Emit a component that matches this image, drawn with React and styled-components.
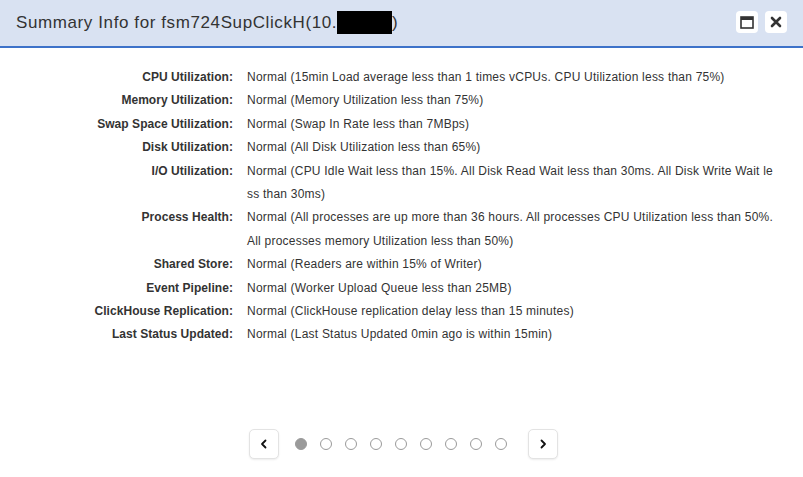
import React from "react";
import styled, { createGlobalStyle } from "styled-components";

const Global = createGlobalStyle`
  html, body { margin: 0; padding: 0; background: #fff; }
  body { font-family: "Liberation Sans", Arial, sans-serif; color: #333; }
  * { box-sizing: border-box; }
`;

const Dialog = styled.div`
  width: 803px;
  height: 477px;
  display: flex;
  flex-direction: column;
  background: #fff;
`;

const Header = styled.div`
  height: 48px;
  flex: none;
  display: flex;
  align-items: center;
  justify-content: space-between;
  padding: 0 16px 2px 16px;
  background: #d9e2f2;
  border-bottom: 2px solid #3d72c9;
`;

const Title = styled.div`
  font-size: 17px;
  color: #333;
  display: flex;
  align-items: center;
  letter-spacing: 0.6px;
  padding-top: 1px;
`;

const Redacted = styled.span`
  display: inline-block;
  width: 55px;
  height: 23px;
  background: #000;
`;

const Tools = styled.div`
  display: flex;
  gap: 7px;
`;

const ToolButton = styled.button`
  width: 22px;
  height: 22px;
  border: none;
  border-radius: 4px;
  background: #fff;
  padding: 0;
  display: flex;
  align-items: center;
  justify-content: center;
  color: #333;
`;

const Body = styled.div`
  flex: 1;
  display: grid;
  grid-template-columns: 233px 1fr;
  column-gap: 14px;
  align-content: start;
  padding: 18px 26px 0 0;
  font-size: 12px;
  line-height: 23.4px;
  letter-spacing: 0.22px;
`;

const Label = styled.div`
  text-align: right;
  font-weight: bold;
  color: #333;
  white-space: nowrap;
  letter-spacing: 0.05px;
`;

const Value = styled.div`
  color: #333;
  word-break: break-all;
`;

const Pager = styled.div`
  flex: none;
  display: flex;
  align-items: center;
  justify-content: center;
  padding-bottom: 2px;
  height: 65px;
  padding-left: 4px;
`;

const NavButton = styled.button`
  width: 30px;
  height: 30px;
  border: 1px solid #e3e3e3;
  border-radius: 5px;
  background: #fff;
  box-shadow: 0 1px 2px rgba(0, 0, 0, 0.08);
  display: flex;
  align-items: center;
  justify-content: center;
  padding: 0;
  color: #111;
`;

const Dots = styled.div`
  display: flex;
  align-items: center;
  gap: 13.1px;
  margin: 0 21px 0 16px;
`;

const Dot = styled.span`
  width: 12px;
  height: 12px;
  border-radius: 50%;
  border: 1.5px solid #9a9a9a;
  background: ${(p) => (p.$active ? "#9a9a9a" : "#fff")};
`;

const rows = [
  ["CPU Utilization:", "Normal (15min Load average less than 1 times vCPUs. CPU Utilization less than 75%)"],
  ["Memory Utilization:", "Normal (Memory Utilization less than 75%)"],
  ["Swap Space Utilization:", "Normal (Swap In Rate less than 7MBps)"],
  ["Disk Utilization:", "Normal (All Disk Utilization less than 65%)"],
  ["I/O Utilization:", "Normal (CPU Idle Wait less than 15%. All Disk Read Wait less than 30ms. All Disk Write Wait less than 30ms)"],
  ["Process Health:", "Normal (All processes are up more than 36 hours. All processes CPU Utilization less than 50%. All processes memory Utilization less than 50%)"],
  ["Shared Store:", "Normal (Readers are within 15% of Writer)"],
  ["Event Pipeline:", "Normal (Worker Upload Queue less than 25MB)"],
  ["ClickHouse Replication:", "Normal (ClickHouse replication delay less than 15 minutes)"],
  ["Last Status Updated:", "Normal (Last Status Updated 0min ago is within 15min)"],
];

export default function App() {
  return (
    <>
      <Global />
      <Dialog>
        <Header>
          <Title>
            Summary Info for fsm724SupClickH(10.<Redacted />)
          </Title>
          <Tools>
            <ToolButton aria-label="maximize">
              <svg width="14" height="13" viewBox="0 0 14 13">
                <rect x="1" y="1" width="12" height="11" fill="none" stroke="#333" strokeWidth="1.6" />
                <rect x="1" y="1" width="12" height="3" fill="#333" />
              </svg>
            </ToolButton>
            <ToolButton aria-label="close">
              <svg width="12" height="12" viewBox="0 0 12 12">
                <path d="M2 2 L10 10 M10 2 L2 10" stroke="#333" strokeWidth="2.6" strokeLinecap="round" />
              </svg>
            </ToolButton>
          </Tools>
        </Header>
        <Body>
          {rows.map(([l, v]) => (
            <React.Fragment key={l}>
              <Label>{l}</Label>
              <Value>{v}</Value>
            </React.Fragment>
          ))}
        </Body>
        <Pager>
          <NavButton aria-label="previous">
            <svg width="10" height="10" viewBox="0 0 10 10">
              <path d="M6.5 1.5 L3 5 L6.5 8.5" fill="none" stroke="#111" strokeWidth="1.8" strokeLinecap="round" strokeLinejoin="round" />
            </svg>
          </NavButton>
          <Dots>
            {Array.from({ length: 9 }).map((_, i) => (
              <Dot key={i} $active={i === 0} />
            ))}
          </Dots>
          <NavButton aria-label="next">
            <svg width="10" height="10" viewBox="0 0 10 10">
              <path d="M3.5 1.5 L7 5 L3.5 8.5" fill="none" stroke="#111" strokeWidth="1.8" strokeLinecap="round" strokeLinejoin="round" />
            </svg>
          </NavButton>
        </Pager>
      </Dialog>
    </>
  );
}
